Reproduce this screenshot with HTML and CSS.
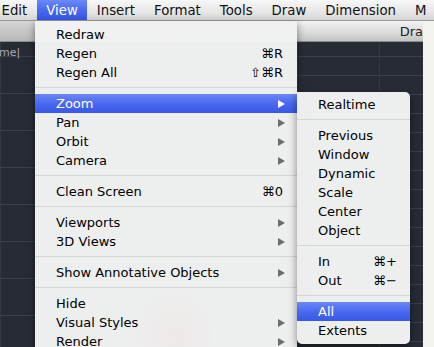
FILE: index.html
```html
<!DOCTYPE html>
<html>
<head>
<meta charset="utf-8">
<link rel="stylesheet" href="styles.css">
</head>
<body>
<div class="screen">
  <div class="menubar">
    <span class="mb-item first">Edit</span>
    <span class="mb-item active">View</span>
    <span class="mb-item">Insert</span>
    <span class="mb-item">Format</span>
    <span class="mb-item">Tools</span>
    <span class="mb-item">Draw</span>
    <span class="mb-item">Dimension</span>
    <span class="mb-item">M</span>
  </div>
  <div class="workspace">
    <div class="left-pane">
      <div class="pane-header"></div>
      <div class="canvas"><div class="cmdline">me|</div></div>
    </div>
    <div class="draw-pane">
      <div class="pane-header draw-header"><span class="draw-title">Dra</span></div>
      <div class="canvas"></div>
    </div>
    <div class="side-strip"></div>
  </div>

  <div class="menu view-menu">
    <div class="tint"></div>
    <div class="item">Redraw</div>
    <div class="item">Regen<span class="key">⌘R</span></div>
    <div class="item">Regen All<span class="key">⇧⌘R</span></div>
    <div class="sep"></div>
    <div class="item hl">Zoom<span class="arrow"></span></div>
    <div class="item">Pan<span class="arrow"></span></div>
    <div class="item">Orbit<span class="arrow"></span></div>
    <div class="item">Camera<span class="arrow"></span></div>
    <div class="sep"></div>
    <div class="item">Clean Screen<span class="key">⌘0</span></div>
    <div class="sep"></div>
    <div class="item">Viewports<span class="arrow"></span></div>
    <div class="item">3D Views<span class="arrow"></span></div>
    <div class="sep"></div>
    <div class="item">Show Annotative Objects<span class="arrow"></span></div>
    <div class="sep"></div>
    <div class="item">Hide</div>
    <div class="item">Visual Styles<span class="arrow"></span></div>
    <div class="item">Render<span class="arrow"></span></div>
  </div>

  <div class="menu sub-menu">
    <div class="item">Realtime</div>
    <div class="sep"></div>
    <div class="item">Previous</div>
    <div class="item">Window</div>
    <div class="item">Dynamic</div>
    <div class="item">Scale</div>
    <div class="item">Center</div>
    <div class="item">Object</div>
    <div class="sep"></div>
    <div class="item">In<span class="key">⌘+</span></div>
    <div class="item">Out<span class="key">⌘−</span></div>
    <div class="sep"></div>
    <div class="item hl">All</div>
    <div class="item">Extents</div>
  </div>
</div>
</body>
</html>
```

FILE: styles.css
```css
* { box-sizing: border-box; }
html, body {
  margin: 0;
  padding: 0;
  width: 434px;
  height: 347px;
  overflow: hidden;
  font-family: "DejaVu Sans", "Liberation Sans", sans-serif;
}
.screen {
  position: relative;
  width: 434px;
  height: 347px;
  overflow: hidden;
  display: flex;
  flex-direction: column;
  background: #262b35;
}
.menubar {
  height: 21px;
  flex: none;
  display: flex;
  align-items: stretch;
  background: linear-gradient(#f7f7f7, #e6e6e6 60%, #d6d6d6);
  border-bottom: 1px solid #9a9a9a;
  font-size: 13.3px;
  color: #111;
  white-space: nowrap;
}
.mb-item {
  display: flex;
  align-items: center;
  padding: 0 9.5px;
}
.mb-item.first { margin-left: -8px; }
.mb-item.active {
  background: linear-gradient(#6c89f6, #4667ee 55%, #3557e6);
  color: #fff;
}
.workspace {
  flex: 1;
  display: flex;
  min-height: 0;
}
.left-pane {
  width: 297px;
  display: flex;
  flex-direction: column;
}
.draw-pane {
  width: 126px;
  display: flex;
  flex-direction: column;
}
.side-strip {
  flex: 1;
  background: #f3f4ee;
}
.pane-header {
  height: 21px;
  flex: none;
  background: linear-gradient(#d6d6d6, #b8b8b8);
  border-bottom: 1px solid #8c8c8c;
}
.draw-header {
  background: linear-gradient(#f2f2f2, #dadada 60%, #c2c2c2);
  display: flex;
  align-items: center;
  justify-content: flex-end;
  overflow: hidden;
  font-size: 13px;
  color: #222;
}
.draw-title { margin-right: 0; }
.canvas {
  flex: 1;
  background-color: #262b35;
  background-image:
    linear-gradient(#3a404b 1px, transparent 1px),
    linear-gradient(90deg, #333844 1px, transparent 1px);
  background-size: 100% 37px, 82px 100%;
  background-position: 0 14px, 0 0;
}
.draw-pane .canvas {
  background-size: 100% 19px, 82px 100%;
  background-position: 0 14px, 0 0;
}
.cmdline {
  height: 14px;
  font-size: 11px;
  color: #a9aab0;
  margin-left: -1px;
  margin-top: 4px;
  line-height: 14px;
}

.menu {
  position: absolute;
  background: rgba(242, 242, 242, 0.98);
  box-shadow: 0 3px 8px rgba(0, 0, 0, 0.45);
  font-size: 13px;
  color: #000;
}
.view-menu {
  left: 35px;
  top: 21px;
  width: 262px;
  height: 340px;
  padding-top: 4px;
}
.sub-menu {
  left: 297px;
  top: 92px;
  width: 113px;
  padding: 3px 0 4px;
  border-radius: 0 5px 5px 5px;
}
.tint {
  position: absolute;
  left: 100px;
  top: 268px;
  width: 80px;
  height: 90px;
  background: radial-gradient(closest-side, rgba(255, 190, 190, 0.12), rgba(255, 190, 190, 0.03) 80%, transparent);
}
.item {
  position: relative;
  height: 19px;
  display: flex;
  align-items: center;
  padding: 0 12px 0 21px;
  white-space: nowrap;
}
.item.hl {
  background: linear-gradient(#6a87f5, #4767ee 55%, #3858e6);
  color: #fff;
}
.key {
  margin-left: auto;
  margin-right: 2px;
}
.sub-menu .key { margin-right: 1px; }
.arrow {
  margin-left: auto;
  width: 0;
  height: 0;
  border-left: 7px solid #6d6d6d;
  border-top: 4.5px solid transparent;
  border-bottom: 4.5px solid transparent;
}
.item.hl .arrow { border-left-color: #fff; }
.sep {
  height: 1px;
  margin: 5px 0 6px;
  background: #d5d5d5;
}
```
